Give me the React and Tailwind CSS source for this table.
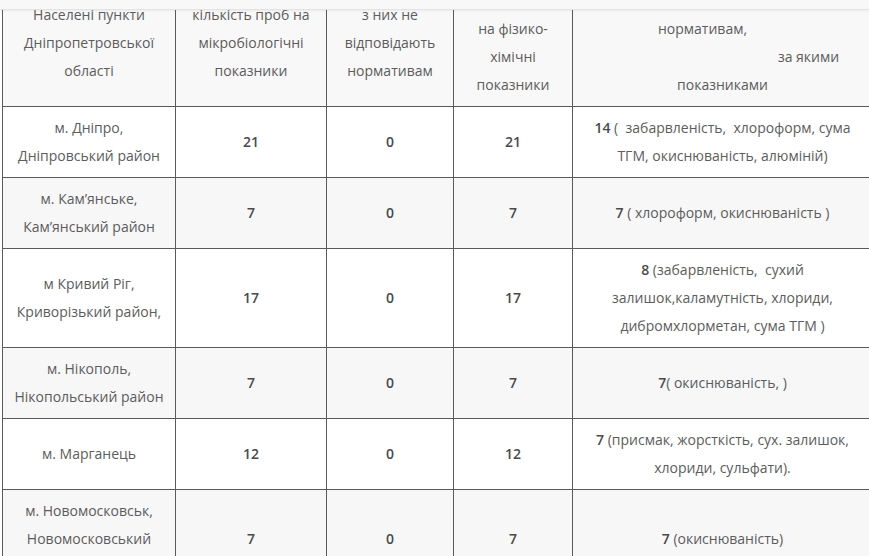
import React from 'react'

const rows = [
  { place: ['м. Дніпро,', 'Дніпровський район'], micro: '21', bad: '0', chem: '21', lead: '14', note: ['(\u00a0 забарвленість,\u00a0 хлороформ, сума', 'ТГМ, окиснюваність, алюміній)'] },
  { place: ['м. Кам’янське,', 'Кам’янський район'], micro: '7', bad: '0', chem: '7', lead: '7', note: ['( хлороформ, окиснюваність )'] },
  { place: ['м Кривий Ріг,', 'Криворізький район,'], micro: '17', bad: '0', chem: '17', lead: '8', note: ['(забарвленість,\u00a0 сухий', 'залишок,каламутність, хлориди,', 'дибромхлорметан, сума ТГМ )'] },
  { place: ['м. Нікополь,', 'Нікопольський район'], micro: '7', bad: '0', chem: '7', lead: '7', tight: true, note: ['( окиснюваність, )'] },
  { place: ['м. Марганець'], micro: '12', bad: '0', chem: '12', lead: '7', note: ['(присмак, жорсткість, сух. залишок,', 'хлориди, сульфати).'] },
  { place: ['м. Новомосковськ,', 'Новомосковський', 'район'], micro: '7', bad: '0', chem: '7', lead: '7', note: ['(окиснюваність)'] },
]

const cell = 'border border-[#5a5a5a] px-2 py-[7px] text-center align-middle'

const Lines = ({ items }) => items.map((t, i) => <span key={i} className="block whitespace-nowrap">{t}</span>)

export default function App() {
  return (
    <div className="relative w-[869px] h-[556px] overflow-hidden bg-white text-[14px] leading-[28px] text-[#5c5c5c]" style={{ fontFamily: '"Open Sans", "Noto Sans", sans-serif' }}>
      {/* sticky page header edge */}
      <div className="absolute top-0 left-0 right-0 h-[10px] bg-[#f8f8f8] border-b border-[#e4e4e4] shadow-[0_1px_2px_rgba(0,0,0,0.06)] z-10"></div>

      <table className="table-fixed border-collapse w-[870px] ml-[2px] -mt-[21px]">
        <colgroup>
          <col className="w-[173px]" />
          <col className="w-[151px]" />
          <col className="w-[127px]" />
          <col className="w-[119px]" />
          <col className="w-[300px]" />
        </colgroup>
        <thead>
          <tr className="bg-[#f8f8f8]">
            <th className={`${cell} font-normal`}><Lines items={['Населені пункти', 'Дніпропетровської', 'області']} /></th>
            <th className={`${cell} font-normal`}><Lines items={['кількість проб на', 'мікробіологічні', 'показники']} /></th>
            <th className={`${cell} font-normal`}><Lines items={['з них не', 'відповідають', 'нормативам']} /></th>
            <th className={`${cell} font-normal`}>
              <span className="block h-[28px]"></span>
              <Lines items={['на фізико-', 'хімічні', 'показники']} />
            </th>
            <th className={`${cell} font-normal`}>
              <span className="block h-[28px]"></span>
              <span className="block whitespace-nowrap pr-[40px]">нормативам,</span>
              <span className="block whitespace-nowrap pl-[172px]">за якими</span>
              <span className="block whitespace-nowrap">показниками</span>
            </th>
          </tr>
        </thead>
        <tbody>
          {rows.map((r, i) => (
            <tr key={i} className={i % 2 === 0 ? 'bg-white' : 'bg-[#f7f7f7]'}>
              <td className={cell}><Lines items={r.place} /></td>
              <td className={`${cell} font-semibold text-[#4a4a4a]`}>{r.micro}</td>
              <td className={`${cell} font-semibold text-[#4a4a4a]`}>{r.bad}</td>
              <td className={`${cell} font-semibold text-[#4a4a4a]`}>{r.chem}</td>
              <td className={cell}>
                {r.note.map((t, j) => (
                  <span key={j} className="block whitespace-nowrap">
                    {j === 0 && <b className="font-semibold text-[#4a4a4a]">{r.lead}</b>}
                    {j === 0 && !r.tight ? ' ' : ''}
                    {t}
                  </span>
                ))}
              </td>
            </tr>
          ))}
        </tbody>
      </table>
    </div>
  )
}
